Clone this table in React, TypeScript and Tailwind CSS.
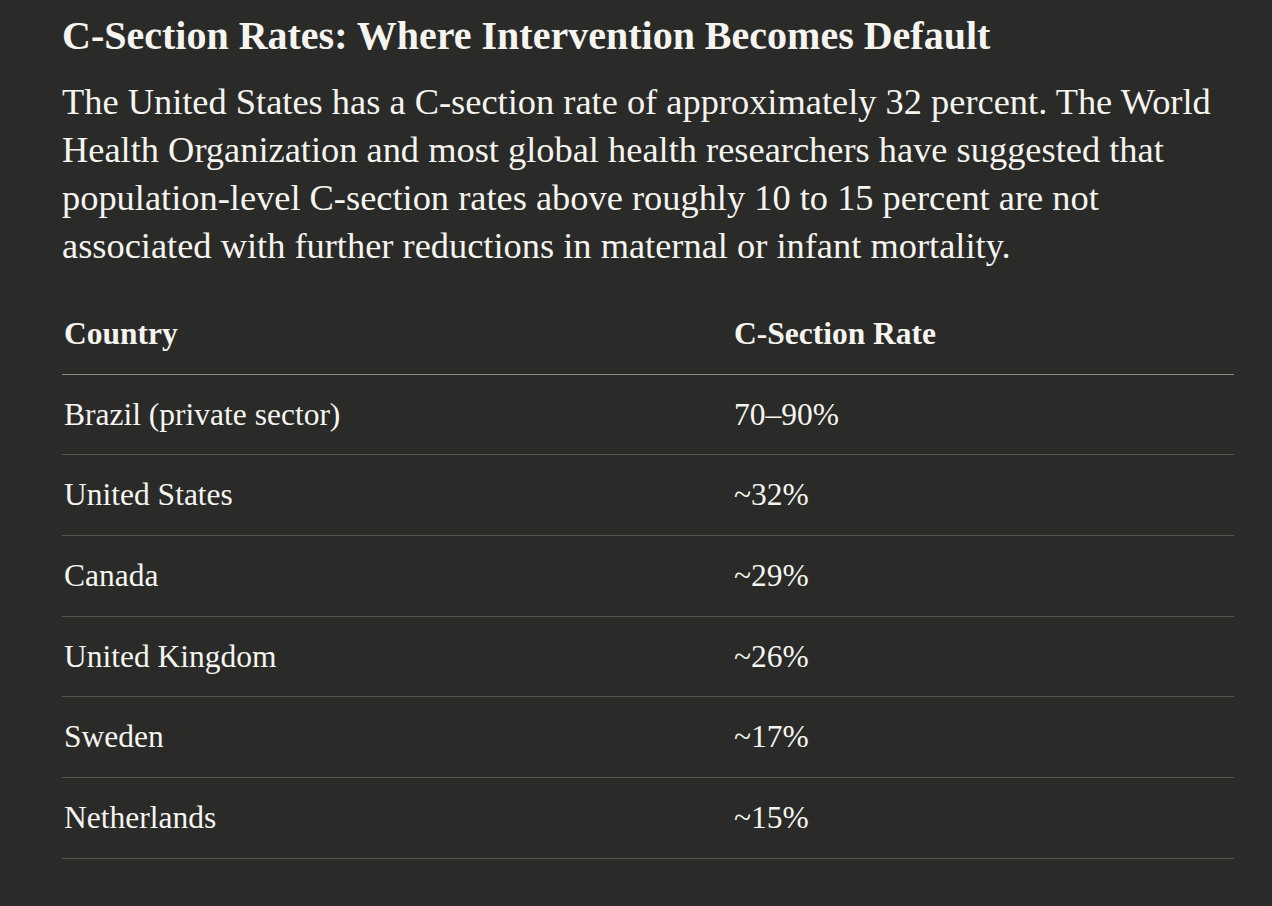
const rows = [
  ["Brazil (private sector)", "70–90%"],
  ["United States", "~32%"],
  ["Canada", "~29%"],
  ["United Kingdom", "~26%"],
  ["Sweden", "~17%"],
  ["Netherlands", "~15%"],
]

export default function App() {
  return (
    <div className="min-h-screen w-full bg-[#2a2a28] text-[#f5f4ef] font-['Liberation_Serif',serif]">
      <div className="px-[62px] pt-[12px] pb-12 w-[1172px] box-content">
        <h2 className="text-[40px] leading-[48px] font-bold">
          C-Section Rates: Where Intervention Becomes Default
        </h2>
        <p className="mt-[18px] text-[36.4px] leading-[48px]">
          The United States has a C-section rate of approximately 32 percent. The World Health Organization and most global health researchers have suggested that population-level C-section rates above roughly 10 to 15 percent are not associated with further reductions in maternal or infant mortality.
        </p>
        <table className="mt-[24px] w-[1172px] border-collapse text-left text-[31.5px]">
          <thead>
            <tr className="border-b border-[#8a8a84]">
              <th className="w-[670px] px-[2px] h-[80px] font-bold">Country</th>
              <th className="px-[2px] font-bold">C-Section Rate</th>
            </tr>
          </thead>
          <tbody>
            {rows.map(([c, r]) => (
              <tr key={c} className="border-b border-[#55554f]">
                <td className="px-[2px] h-[80.7px]">{c}</td>
                <td className="px-[2px]">{r}</td>
              </tr>
            ))}
          </tbody>
        </table>
      </div>
    </div>
  )
}
